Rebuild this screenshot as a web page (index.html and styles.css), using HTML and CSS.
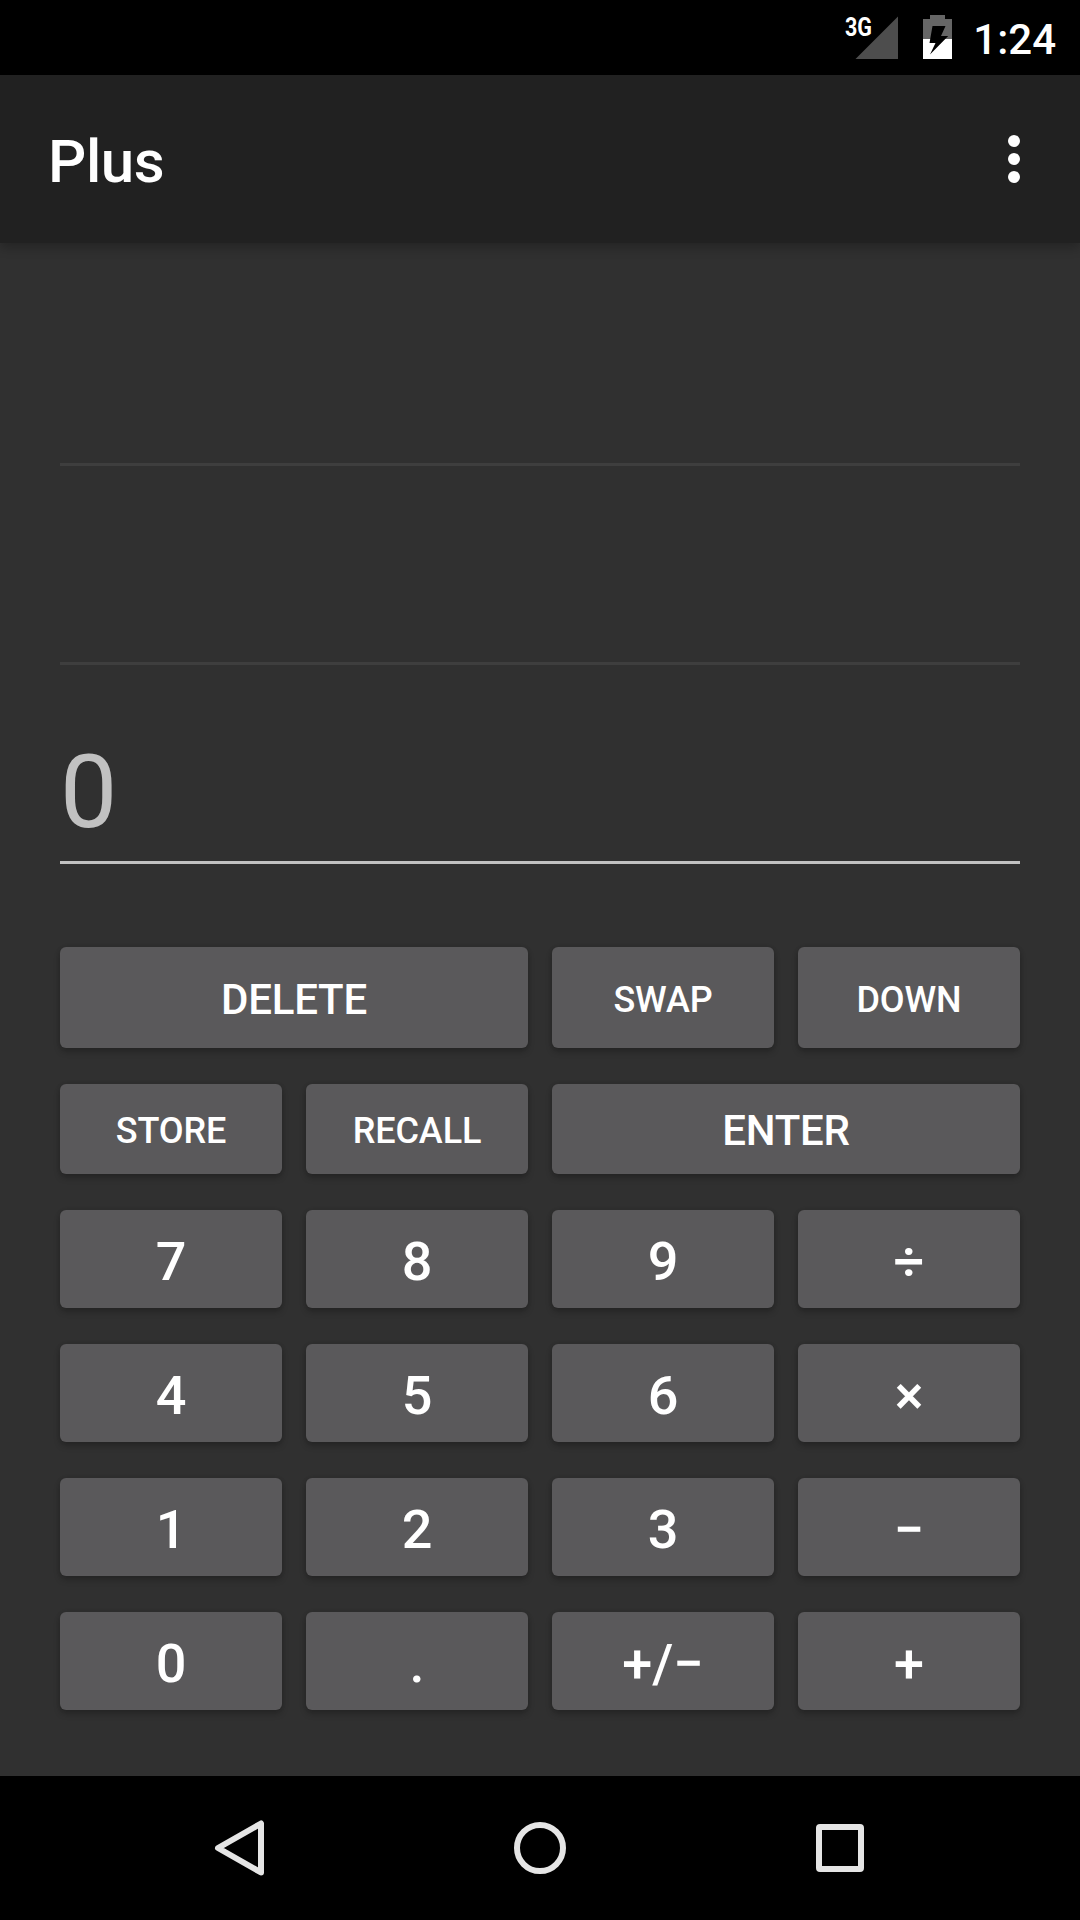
FILE: index.html
```html
<!DOCTYPE html>
<html lang="en">
<head>
<meta charset="utf-8">
<title>Plus</title>
<link rel="stylesheet" href="styles.css">
</head>
<body>
<div class="screen">
  <header class="status">
    <svg class="signal" width="54" height="75" viewBox="0 0 54 75">
      <path d="M11.5 59 L54 16.5 V59 Z" fill="#4d4d4d"/>
      <text class="network" x="1" y="35.5" textLength="27" lengthAdjust="spacingAndGlyphs">3G</text>
    </svg>
    <svg class="battery" width="29" height="75" viewBox="0 0 29 75">
      <path d="M7 15 H22 V19 H29 V39 H0 V19 H7 Z" fill="#666"/>
      <path d="M0 39 H29 V59 H0 Z" fill="#fff"/>
      <path d="M9.5 26 H22.5 L18 36 H25.2 L7 54.5 L12.5 43 H6.5 Z" fill="#000"/>
    </svg>
    <span class="clock">1:24</span>
  </header>
  <div class="appbar">
    <h1 class="title">Plus</h1>
    <svg class="more" width="12" height="48" viewBox="0 0 12 48">
      <circle cx="6" cy="6" r="6"/><circle cx="6" cy="24" r="6"/><circle cx="6" cy="42" r="6"/>
    </svg>
  </div>
  <main class="content">
    <div class="stack">
      <div class="entry"></div>
      <div class="entry"></div>
      <div class="entry active">0</div>
    </div>
    <div class="keypad">
      <button class="key large wide">DELETE</button>
      <button class="key small">SWAP</button>
      <button class="key small">DOWN</button>
      <button class="key small">STORE</button>
      <button class="key small">RECALL</button>
      <button class="key large wide">ENTER</button>
      <button class="key">7</button>
      <button class="key">8</button>
      <button class="key">9</button>
      <button class="key">÷</button>
      <button class="key">4</button>
      <button class="key">5</button>
      <button class="key">6</button>
      <button class="key">×</button>
      <button class="key">1</button>
      <button class="key">2</button>
      <button class="key">3</button>
      <button class="key">−</button>
      <button class="key">0</button>
      <button class="key">.</button>
      <button class="key">+/−</button>
      <button class="key">+</button>
    </div>
  </main>
  <nav class="navbar">
    <svg width="60" height="60" viewBox="0 0 60 60"><path d="M51 5.5 V54.5 L8 30 Z"/></svg>
    <svg width="60" height="60" viewBox="0 0 60 60"><circle cx="30" cy="30" r="23"/></svg>
    <svg width="60" height="60" viewBox="0 0 60 60"><rect x="9" y="9" width="42" height="42" rx="1"/></svg>
  </nav>
</div>
</body>
</html>
```
FILE: styles.css
```css
* { box-sizing: border-box; }
body { margin: 0; background: #303030; }
.screen {
  width: 1080px;
  height: 1920px;
  display: flex;
  flex-direction: column;
  background: #303030;
  color: #fff;
  font-family: Roboto, "Liberation Sans", sans-serif;
}
.status {
  height: 75px;
  display: flex;
  align-items: center;
  justify-content: flex-end;
  padding-right: 24px;
  background: #000;
}
.signal { margin-right: 25px; }
.network { font-size: 25px; font-weight: 700; fill: #fff; }
.battery { margin-right: 21px; }
.clock { font-size: 42px; font-weight: 500; line-height: 49px; padding-top: 3px; }
.appbar {
  height: 168px;
  display: flex;
  align-items: center;
  justify-content: space-between;
  padding: 0 60px 0 48px;
  background: #212121;
  box-shadow: 0 5px 10px rgba(0, 0, 0, .24);
}
.title { margin: 0; font-size: 60px; font-weight: 500; line-height: 70px; padding-top: 5px; letter-spacing: -.4px; }
.more { fill: #fff; }
.content { flex: 1; padding: 24px 60px 0; }
.entry {
  height: 199px;
  border-bottom: 3px solid #3e3e3e;
  font-size: 102px;
  line-height: 120px;
  padding-top: 67px;
}
.active { color: #c1c1c1; border-color: #c1c1c1; }
.keypad {
  margin-top: 83px;
  display: grid;
  grid-template-columns: repeat(4, 222px);
  grid-template-rows: 101px 90px repeat(4, 98px);
  gap: 36px 24px;
}
.key {
  border: 0;
  padding: 6px 0 0;
  border-radius: 6px;
  background: #5a595b;
  box-shadow: 0 4px 6px rgba(0, 0, 0, .22), 0 0 4px rgba(0, 0, 0, .1);
  color: #fff;
  font: 500 54px/62px Roboto, "Liberation Sans", sans-serif;
}
.large { padding-top: 4px; font-size: 42px; line-height: 50px; letter-spacing: -.2px; }
.small { padding-top: 4px; font-size: 36px; line-height: 42px; letter-spacing: -.1px; }
.wide { grid-column: span 2; }
.navbar {
  height: 144px;
  display: grid;
  grid-template-columns: repeat(3, 300px);
  place-content: center;
  justify-items: center;
  background: #000;
}
.navbar svg { fill: none; stroke: #e5e5e5; stroke-width: 6; stroke-linejoin: round; }
```
